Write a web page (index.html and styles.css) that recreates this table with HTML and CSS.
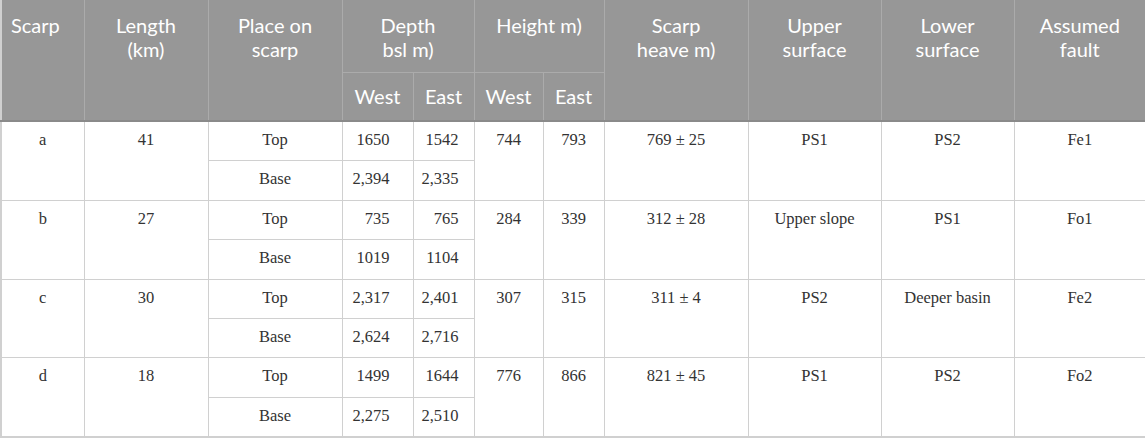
FILE: index.html
```html
<!DOCTYPE html>
<html>
<head>
<meta charset="utf-8">
<link rel="stylesheet" href="styles.css">
</head>
<body>
<table class="data">
  <colgroup>
    <col class="c-scarp"><col class="c-len"><col class="c-place"><col class="c-dw"><col class="c-de"><col class="c-hw"><col class="c-he"><col class="c-heave"><col class="c-up"><col class="c-low"><col class="c-fault">
  </colgroup>
  <thead>
    <tr class="h1">
      <th rowspan="2" class="left">Scarp</th>
      <th rowspan="2">Length<br>(km)</th>
      <th rowspan="2">Place on<br>scarp</th>
      <th colspan="2">Depth<br>bsl m)</th>
      <th colspan="2">Height m)</th>
      <th rowspan="2">Scarp<br>heave m)</th>
      <th rowspan="2">Upper<br>surface</th>
      <th rowspan="2">Lower<br>surface</th>
      <th rowspan="2">Assumed<br>fault</th>
    </tr>
    <tr class="h2">
      <th>West</th><th>East</th><th>West</th><th>East</th>
    </tr>
  </thead>
  <tbody>
    <tr><td rowspan="2">a</td><td rowspan="2">41</td><td>Top</td><td class="dw">1650</td><td class="de">1542</td><td rowspan="2">744</td><td rowspan="2">793</td><td rowspan="2">769 ± 25</td><td rowspan="2">PS1</td><td rowspan="2">PS2</td><td rowspan="2">Fe1</td></tr>
    <tr><td>Base</td><td class="dw">2,394</td><td class="de">2,335</td></tr>
    <tr><td rowspan="2">b</td><td rowspan="2">27</td><td>Top</td><td class="dw">735</td><td class="de">765</td><td rowspan="2">284</td><td rowspan="2">339</td><td rowspan="2">312 ± 28</td><td rowspan="2">Upper slope</td><td rowspan="2">PS1</td><td rowspan="2">Fo1</td></tr>
    <tr><td>Base</td><td class="dw">1019</td><td class="de">1104</td></tr>
    <tr><td rowspan="2">c</td><td rowspan="2">30</td><td>Top</td><td class="dw">2,317</td><td class="de">2,401</td><td rowspan="2">307</td><td rowspan="2">315</td><td rowspan="2">311 ± 4</td><td rowspan="2">PS2</td><td rowspan="2">Deeper basin</td><td rowspan="2">Fe2</td></tr>
    <tr><td>Base</td><td class="dw">2,624</td><td class="de">2,716</td></tr>
    <tr><td rowspan="2">d</td><td rowspan="2">18</td><td>Top</td><td class="dw">1499</td><td class="de">1644</td><td rowspan="2">776</td><td rowspan="2">866</td><td rowspan="2">821 ± 45</td><td rowspan="2">PS1</td><td rowspan="2">PS2</td><td rowspan="2">Fo2</td></tr>
    <tr><td>Base</td><td class="dw">2,275</td><td class="de">2,510</td></tr>
  </tbody>
</table>
</body>
</html>
```

FILE: styles.css
```css
html, body {
  margin: 0;
  padding: 0;
  background: #fff;
}
.data {
  width: 1145px;
  table-layout: fixed;
  border-collapse: collapse;
  border: 2px solid #d0d0d0;
  border-top: none;
}
.c-scarp { width: 83px; }
.c-len { width: 124px; }
.c-place { width: 134px; }
.c-dw { width: 71px; }
.c-de { width: 61px; }
.c-hw { width: 69px; }
.c-he { width: 61px; }
.c-heave { width: 144px; }
.c-up { width: 133px; }
.c-low { width: 133px; }
.c-fault { width: 132px; }

th {
  background: #979797;
  color: #fff;
  font-family: Lato, "Open Sans", sans-serif;
  font-weight: normal;
  font-size: 20px;
  line-height: 24px;
  text-align: center;
  vertical-align: top;
  padding: 13px 4px 0;
  border: 1px solid #ababab;
  border-top: none;
}
th.left { text-align: left; padding-left: 9px; }
.h1 th { height: 59px; }
.h1 th[rowspan] { height: auto; }
.h2 th { height: 36px; padding-top: 11px; border-bottom: 2px solid #8a8a8a; }
thead th[rowspan] { border-bottom: 2px solid #8a8a8a; }

td {
  font-family: "Liberation Serif", "Times New Roman", serif;
  font-size: 16.5px;
  line-height: 22px;
  color: #333;
  text-align: center;
  vertical-align: top;
  padding: 7px 4px 0;
  height: 31.4px;
  border: 1px solid #d0d0d0;
}
td.dw { text-align: right; padding-right: 23px; }
td.de { text-align: right; padding-right: 15px; }
```
